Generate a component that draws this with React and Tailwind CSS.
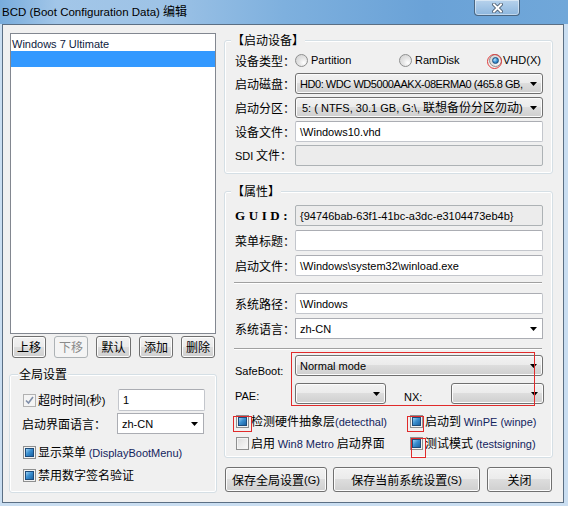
import React from "react";

const FONT = "font-['Noto_Sans_CJK_SC',sans-serif]";

function L({ children, className = "" }) {
  return (
    <span className={`font-['Liberation_Sans','Noto_Sans_CJK_SC',sans-serif] text-[11px] ${className}`}>
      {children}
    </span>
  );
}

function LB({ children }) {
  return <L className="text-[#13245e]">{children}</L>;
}

function Arrow() {
  return (
    <svg width="7" height="4" viewBox="0 0 7 4" className="shrink-0">
      <path d="M0 0H7L3.5 4Z" fill="#000" />
    </svg>
  );
}

function Btn({ children, className = "", disabled }) {
  return (
    <div
      className={`flex items-center justify-center rounded-[3px] border leading-[16px] ${
        disabled
          ? "border-[#adb2b5] bg-[#f4f4f4] text-[#8a8a8a]"
          : "border-[#707070] bg-[linear-gradient(#f2f2f2_0%,#ebebeb_49%,#dddddd_50%,#cfcfcf_100%)] shadow-[inset_0_0_0_1px_#fcfcfc] text-black"
      } ${className}`}
    >
      {children}
    </div>
  );
}

function ComboBtn({ text, className = "", textClass = "" }) {
  return (
    <div
      className={`flex items-center justify-between rounded-[3px] border border-[#707070] bg-[linear-gradient(#f2f2f2_0%,#ebebeb_49%,#dddddd_50%,#cfcfcf_100%)] shadow-[inset_0_0_0_1px_#fcfcfc] pl-[4px] pr-[5px] leading-[16px] whitespace-nowrap overflow-hidden ${className}`}
    >
      <span className="overflow-hidden">
        {typeof text === "string" ? <L className={textClass}>{text}</L> : text}
      </span>
      <Arrow />
    </div>
  );
}

function ComboWhite({ text, className = "" }) {
  return (
    <div
      className={`flex items-center justify-between border border-[#abadb3] bg-white pl-[4px] pr-[5px] leading-[16px] ${className}`}
    >
      <L>{text}</L>
      <Arrow />
    </div>
  );
}

function Input({ text = "", className = "", disabled }) {
  return (
    <div
      className={`flex items-center rounded-[2px] border pl-[4px] leading-[16px] whitespace-nowrap ${
        disabled
          ? "border-[#adb2b5] bg-[#ececec]"
          : "border-[#c3c6cc] border-t-[#abadb3] bg-white"
      } ${className}`}
    >
      <L>{text}</L>
    </div>
  );
}

function CheckBlue() {
  return (
    <div className="w-[13px] h-[13px] shrink-0 border border-[#8e8f8f] bg-[#f2f2f2] flex items-center justify-center">
      <div className="w-[9px] h-[9px] border border-[#1d4b7a] bg-[linear-gradient(135deg,#9bd0f2_0%,#3a8fd0_45%,#1c63a3_100%)]" />
    </div>
  );
}

function CheckGray() {
  return (
    <div className="w-[13px] h-[13px] shrink-0 border border-[#b1b1b1] bg-[#f4f4f4] flex items-center justify-center">
      <svg width="9" height="9" viewBox="0 0 9 9">
        <path d="M1 4.5L3.5 7L8 1" fill="none" stroke="#7f8ea8" strokeWidth="1.6" />
      </svg>
    </div>
  );
}

function CheckEmpty() {
  return (
    <div className="w-[13px] h-[13px] shrink-0 border border-[#8e8f8f] bg-[linear-gradient(135deg,#dcdcdc,#fbfbfb)] shadow-[inset_0_0_0_1px_#f4f4f4]" />
  );
}

function Radio({ selected }) {
  return (
    <div className="w-[13px] h-[13px] shrink-0 rounded-full border border-[#8e8f8f] bg-[radial-gradient(circle_at_70%_70%,#ffffff_0%,#e6e6e6_40%,#cfcfcf_100%)] flex items-center justify-center">
      {selected && (
        <div className="w-[7px] h-[7px] rounded-full border border-[#1b4f7f] bg-[radial-gradient(circle_at_35%_35%,#bfe4fb_0%,#3b93d3_50%,#15589a_100%)]" />
      )}
    </div>
  );
}

function Group({ label, className = "", labelClass = "", children }) {
  return (
    <div
      className={`relative rounded-[3px] border border-[#d5dfe5] shadow-[inset_0_0_0_1px_#ffffff] ${className}`}
    >
      <div
        className={`absolute top-[-9px] bg-[#f0f0f0] px-[1px] leading-[16px] ${labelClass}`}
      >
        {label}
      </div>
      {children}
    </div>
  );
}

function Row({ label, children, className = "", labelClass = "" }) {
  return (
    <div className={`flex items-center ${className}`}>
      <div className={`w-[60px] shrink-0 leading-[16px] ${labelClass}`}>{label}</div>
      {children}
    </div>
  );
}

function Sep() {
  return <div className="-ml-[1px] w-[308px] h-[2px] border-t border-[#a0a0a0] border-b border-b-white" />;
}

export default function App() {
  return (
    <div
      className={`relative w-[568px] h-[506px] overflow-hidden bg-[#cadef1] ${FONT} text-[12px] text-black`}
    >
      {/* Title bar */}
      <div className="h-[24px] flex items-start justify-between bg-[linear-gradient(90deg,#78acdc_0%,#a2c6e8_10%,#9ec3e6_28%,#7eb0de_50%,#6aa2d7_75%,#70a7d9_100%)]">
        <div className="pl-[2px] pt-[3px] leading-[16px] text-[12px] text-black">
          <span className="font-['Liberation_Sans',sans-serif] text-[11.5px]">BCD (Boot Configuration Data) </span>
          编辑
        </div>
        <div className="mr-[48px] w-[46px] h-[16px] rounded-b-[4px] border border-t-0 border-[#4a6682] bg-[linear-gradient(#b7d2ec,#8cb6de)] shadow-[inset_0_0_0_1px_rgba(255,255,255,0.45)] flex items-center justify-center">
          <svg width="11" height="10" viewBox="0 0 11 10">
            <path d="M2 1.5L9 8.5M9 1.5L2 8.5" stroke="#3e4f63" strokeWidth="3.6" strokeLinecap="square" />
            <path d="M2 1.5L9 8.5M9 1.5L2 8.5" stroke="#ffffff" strokeWidth="2" strokeLinecap="square" />
          </svg>
        </div>
      </div>

      {/* Client area */}
      <div className="ml-[2px] w-[562px] h-[479px] border border-[#5b6f84] bg-[#f0f0f0] flex items-start pl-[7px] pt-[8px]">
        {/* Left column */}
        <div className="w-[206px] flex flex-col">
          <div className="h-[301px] border border-[#828790] bg-white py-[1px]">
            <div className="h-[16px] pl-[1px] leading-[16px]">
              <L className="text-[#0d1a40]">Windows 7 Ultimate</L>
            </div>
            <div className="h-[16px] bg-[#3399ff]" />
          </div>
          <div className="mt-[2px] pl-[2px] flex gap-[8px]">
            <Btn className="w-[34px] h-[22px]">上移</Btn>
            <Btn className="w-[34px] h-[22px]" disabled>下移</Btn>
            <Btn className="w-[35px] h-[22px]">默认</Btn>
            <Btn className="w-[34px] h-[22px]">添加</Btn>
            <Btn className="w-[34px] h-[22px]">删除</Btn>
          </div>
          <Group
            label="全局设置"
            labelClass="left-[8px]"
            className="mt-[16px] -ml-[1px] w-[208px] h-[119px] pt-[14px] pl-[13px] flex flex-col"
          >
            <div className="flex items-center h-[22px]">
              <div className="w-[95px] flex items-center gap-[2px]">
                <CheckGray />
                <span className="leading-[16px]">
                  超时时间<L>(</L>秒<L>)</L>
                </span>
              </div>
              <Input text="1" className="w-[87px] h-[22px]" />
            </div>
            <div className="mt-[2px] flex items-center h-[21px]">
              <div className="w-[95px] -ml-[1px] pr-[1px] leading-[16px]">启动界面语言：</div>
              <ComboWhite text="zh-CN" className="w-[87px] h-[21px]" />
            </div>
            <div className="mt-[10px] flex items-center h-[16px] gap-[2px]">
              <CheckBlue />
              <span className="leading-[16px]">
                显示菜单 <LB>(DisplayBootMenu)</LB>
              </span>
            </div>
            <div className="mt-[7px] flex items-center h-[16px] gap-[2px]">
              <CheckBlue />
              <span className="leading-[16px]">禁用数字签名验证</span>
            </div>
          </Group>
        </div>

        {/* Right column */}
        <div className="ml-[8px] mt-[7px] w-[329px] flex flex-col">
          <Group
            label="【启动设备】"
            labelClass="left-[6px]"
            className="h-[134px] pt-[10px] pl-[10px] flex flex-col gap-[3px]"
          >
            <Row label="设备类型：" className="h-[19px]">
              <div className="flex items-center">
                <div className="w-[104px] flex items-center gap-[3px]">
                  <Radio />
                  <L>Partition</L>
                </div>
                <div className="w-[90px] flex items-center gap-[3px]">
                  <Radio />
                  <L>RamDisk</L>
                </div>
                <div className="flex items-center gap-[1px]">
                  <Radio selected />
                  <L>VHD(X)</L>
                </div>
              </div>
            </Row>
            <Row label="启动磁盘：" className="h-[21px]">
              <ComboBtn
                text="HD0: WDC WD5000AAKX-08ERMA0 (465.8 GB,"
                textClass="tracking-[-0.45px]"
                className="w-[248px] h-[21px]"
              />
            </Row>
            <Row label="启动分区：" className="h-[21px]">
              <ComboBtn
                text={
                  <>
                    <L>5: ( NTFS, 30.1 GB, G:\, </L>联想备份分区勿动<L>)</L>
                  </>
                }
                className="w-[248px] h-[21px] !pl-[6px]"
              />
            </Row>
            <Row label="设备文件：" className="h-[21px]">
              <Input text="\Windows10.vhd" className="w-[248px] h-[21px]" />
            </Row>
            <Row label={<><L>SDI</L> 文件：</>} className="h-[21px]">
              <Input disabled className="w-[248px] h-[21px]" />
            </Row>
          </Group>

          <Group
            label="【属性】"
            labelClass="left-[6px]"
            className="mt-[17px] h-[267px] pt-[13px] pl-[10px] flex flex-col"
          >
            <Row
              label="GUID:"
              className="h-[21px]"
              labelClass="font-['Liberation_Serif',serif] font-bold text-[13px] tracking-[3.6px]"
            >
              <Input disabled text="{94746bab-63f1-41bc-a3dc-e3104473eb4b}" className="w-[248px] h-[21px]" />
            </Row>
            <Row label="菜单标题：" className="mt-[4px] h-[21px]">
              <Input className="w-[248px] h-[21px]" />
            </Row>
            <Row label="启动文件：" className="mt-[4px] h-[21px]">
              <Input text="\Windows\system32\winload.exe" className="w-[248px] h-[21px]" />
            </Row>
            <div className="mt-[6px]">
              <Sep />
            </div>
            <Row label="系统路径：" className="mt-[9px] h-[21px]">
              <Input text="\Windows" className="w-[248px] h-[21px]" />
            </Row>
            <Row label="系统语言：" className="mt-[4px] h-[21px]">
              <ComboWhite text="zh-CN" className="w-[248px] h-[21px]" />
            </Row>
            <div className="mt-[9px]">
              <Sep />
            </div>
            <div className="mt-[5px] flex items-start h-[21px]">
              <div className="w-[60px] pt-[7px] leading-[16px]">
                <L>SafeBoot:</L>
              </div>
              <ComboBtn text="Normal mode" className="w-[248px] h-[21px]" />
            </div>
            <div className="mt-[7px] flex items-start h-[21px]">
              <div className="w-[60px] pt-[4px] leading-[16px]">
                <L>PAE:</L>
              </div>
              <ComboBtn text="" className="w-[91px] h-[21px]" />
              <div className="ml-[18px] w-[47px] pt-[5px] leading-[16px]">
                <L>NX:</L>
              </div>
              <ComboBtn text="" className="w-[93px] h-[21px]" />
            </div>
            <div className="mt-[9px] flex items-center h-[16px]">
              <div className="w-[175px] pl-[1px] flex items-center gap-[2px]">
                <CheckBlue />
                <span className="leading-[16px]">
                  检测硬件抽象层<LB>(detecthal)</LB>
                </span>
              </div>
              <div className="flex items-center gap-[2px]">
                <CheckBlue />
                <span className="leading-[16px]">
                  启动到 <LB>WinPE (winpe)</LB>
                </span>
              </div>
            </div>
            <div className="mt-[6px] flex items-center h-[16px]">
              <div className="w-[175px] pl-[1px] flex items-center gap-[2px]">
                <CheckEmpty />
                <span className="leading-[16px]">
                  启用 <LB>Win8 Metro</LB> 启动界面
                </span>
              </div>
              <div className="flex items-center gap-[2px]">
                <CheckBlue />
                <span className="leading-[16px]">
                  测试模式 <LB>(testsigning)</LB>
                </span>
              </div>
            </div>
          </Group>

          <div className="mt-[9px] ml-[1px] flex">
            <Btn className="w-[102px] h-[25px]">
              保存全局设置<L>(G)</L>
            </Btn>
            <Btn className="ml-[6px] w-[147px] h-[25px]">
              保存当前系统设置<L>(S)</L>
            </Btn>
            <Btn className="ml-[7px] w-[65px] h-[25px]">关闭</Btn>
          </div>
        </div>
      </div>

      {/* Red annotation marks */}
      <div className="absolute left-[487px] top-[54px] w-[15px] h-[15px] rounded-full border border-[#e03a3a]" />
      <div className="absolute left-[291px] top-[352px] w-[244px] h-[54px] border border-[#e02a2a]" />
      <div className="absolute left-[233px] top-[416px] w-[19px] h-[16px] border border-[#e02a2a]" />
      <div className="absolute left-[407px] top-[416px] w-[17px] h-[16px] border border-[#e02a2a]" />
      <div className="absolute left-[411px] top-[438px] w-[15px] h-[20px] border border-[#e02a2a]" />
    </div>
  );
}
